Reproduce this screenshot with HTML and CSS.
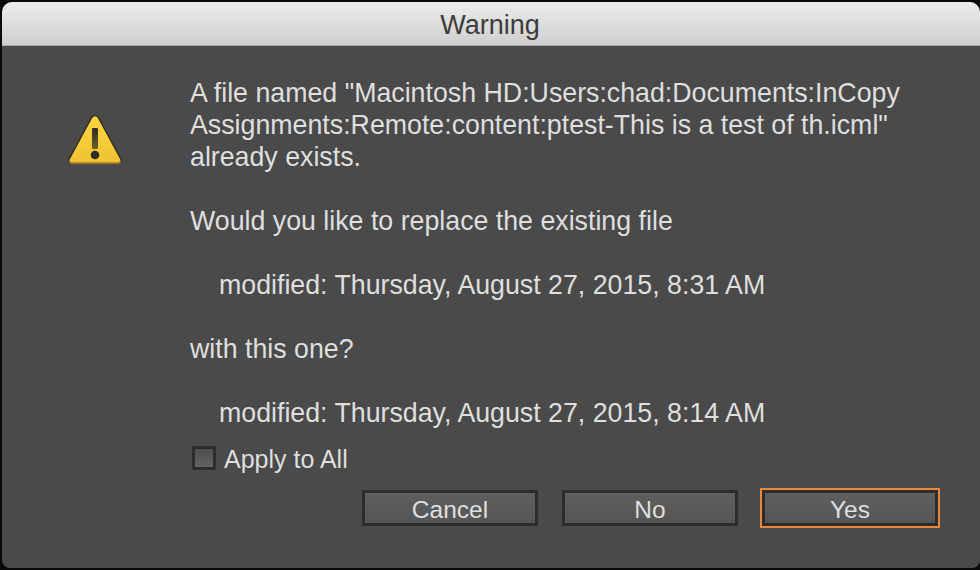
FILE: index.html
```html
<!DOCTYPE html>
<html lang="en">
<head>
<meta charset="utf-8">
<title>Warning</title>
<link rel="stylesheet" href="styles.css">
</head>
<body>
<div class="window">
  <div class="titlebar">Warning</div>
  <div class="content">
    <div class="main">
      <svg class="icon" width="56" height="54" viewBox="0 0 56 54">
        <defs>
          <linearGradient id="fill" x1="0" y1="0" x2="0" y2="1">
            <stop offset="0" stop-color="#fbd63f"/>
            <stop offset="1" stop-color="#efc233"/>
          </linearGradient>
          <linearGradient id="bar" x1="0" y1="0" x2="0" y2="1">
            <stop offset="0" stop-color="#2f2d22"/>
            <stop offset="1" stop-color="#6a5f28"/>
          </linearGradient>
        </defs>
        <path d="M28 2.5c-1.6 0-2.8.9-3.6 2.3L2.2 45.8C1 48 2 50.5 4.6 50.5h46.8c2.6 0 3.6-2.5 2.4-4.7L31.6 4.8C30.800 3.400 29.600 2.500 28 2.500z" fill="url(#fill)" stroke="#34301f" stroke-width="1.500"/>
        <path d="M2.500 48.500c.5 1.300 1 2 2.100 2h46.800c1.100 0 1.700-.7 2.100-2" fill="none" stroke="#96722a" stroke-width="1.500"/>
        <rect x="25" y="15" width="6" height="21" rx="1" fill="url(#bar)"/>
        <circle cx="28" cy="42" r="4.300" fill="#2e2c20"/>
      </svg>
      <div class="message">
        <p>A file named "Macintosh HD:Users:chad:Documents:InCopy<br>Assignments:Remote:content:ptest-This is a test of th.icml"<br>already exists.</p>
        <p>Would you like to replace the existing file</p>
        <p class="indent">modified: Thursday, August 27, 2015, 8:31 AM</p>
        <p>with this one?</p>
        <p class="indent">modified: Thursday, August 27, 2015, 8:14 AM</p>
      </div>
    </div>
    <label class="apply"><span class="checkbox"></span><span class="apply-text">Apply to All</span></label>
    <div class="buttons">
      <div class="button">Cancel</div>
      <div class="button">No</div>
      <div class="button default">Yes</div>
    </div>
  </div>
</div>
</body>
</html>
```
FILE: styles.css
```css
html, body {
  margin: 0;
  padding: 0;
  width: 980px;
  height: 570px;
  background: #0a0a0a;
  overflow: hidden;
}
body {
  padding: 2px 0 2px 2px;
  box-sizing: border-box;
  font-family: "Liberation Sans", Arial, sans-serif;
}
.window {
  width: 978px;
  height: 566px;
  background: #4a4a4a;
  border-radius: 10px 10px 8px 8px;
  overflow: hidden;
  display: flex;
  flex-direction: column;
}
.titlebar {
  height: 43px;
  flex: none;
  background: linear-gradient(#ececec, #cfcfcf);
  border-bottom: 1px solid #a9a9a9;
  color: #3c3c3c;
  font-size: 27px;
  line-height: 46px;
  text-align: center;
  padding-right: 2px;
}
.content {
  flex: 1;
  display: flex;
  flex-direction: column;
  color: #dfdfdf;
  font-size: 25px;
}
.main {
  display: flex;
  padding: 31px 0 0 65px;
}
.icon {
  flex: none;
  margin-top: 36px;
  margin-right: 67px;
}
.message {
  font-size: 26.75px;
}
.message p {
  margin: 0 0 32px;
  line-height: 32px;
  white-space: nowrap;
}
.message p:last-child { margin-bottom: 0; }
.message .indent { padding-left: 29px; }
.apply {
  display: flex;
  align-items: center;
  margin: 13px 0 0 190px;
  height: 32px;
  gap: 8px;
}
.apply-text { margin-top: 2px; }
.checkbox {
  width: 18px;
  height: 18px;
  border: 3px solid #2d2d2d;
  background: linear-gradient(#4e4e4e, #626262);
  flex: none;
}
.buttons {
  display: flex;
  justify-content: flex-end;
  align-items: center;
  gap: 24px;
  margin-top: 16px;
  padding-right: 42px;
}
.button {
  width: 170px;
  height: 30px;
  border: 3px solid #2d2d2d;
  background: linear-gradient(#5f5f5f, #555555);
  text-align: center;
  font-size: 24.5px;
  line-height: 33px;
}
.default {
  outline: 2px solid #e8883a;
}
```
